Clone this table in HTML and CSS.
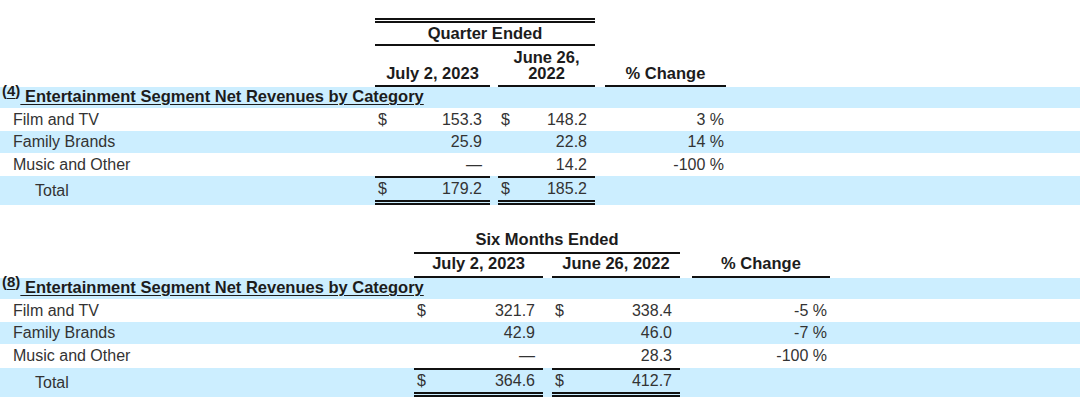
FILE: index.html
```html
<!DOCTYPE html>
<html lang="en">
<head>
<meta charset="utf-8">
<title>Entertainment Segment Net Revenues by Category</title>
<link rel="stylesheet" href="styles.css">
</head>
<body>
<table class="fin fin-q">
  <colgroup>
    <col class="c-label"><col class="c-a1"><col class="c-g1"><col class="c-a2"><col class="c-g2"><col class="c-pct"><col class="c-rest">
  </colgroup>
  <thead>
    <tr class="r-period">
      <td></td>
      <th colspan="3" class="period boxed-top">Quarter Ended</th>
      <td colspan="3"></td>
    </tr>
    <tr class="r-dates">
      <td></td>
      <th class="date">July 2, 2023</th>
      <td></td>
      <th class="date">June 26,<br>2022</th>
      <td></td>
      <th class="date">% Change</th>
      <td></td>
    </tr>
  </thead>
  <tbody>
    <tr class="band r-cat">
      <td colspan="7" class="cat"><sup class="fn">(<u>4</u>)</sup><u> Entertainment Segment Net Revenues by Category</u></td>
    </tr>
    <tr class="r-a">
      <td class="lbl">Film and TV</td>
      <td><div class="money"><span>$</span><span>153.3</span></div></td>
      <td></td>
      <td><div class="money"><span>$</span><span>148.2</span></div></td>
      <td></td>
      <td class="pct">3 %</td>
      <td></td>
    </tr>
    <tr class="band r-b">
      <td class="lbl">Family Brands</td>
      <td><div class="money"><span></span><span>25.9</span></div></td>
      <td></td>
      <td><div class="money"><span></span><span>22.8</span></div></td>
      <td></td>
      <td class="pct">14 %</td>
      <td></td>
    </tr>
    <tr class="r-a">
      <td class="lbl">Music and Other</td>
      <td><div class="money"><span></span><span>—</span></div></td>
      <td></td>
      <td><div class="money"><span></span><span>14.2</span></div></td>
      <td></td>
      <td class="pct">-100 %</td>
      <td></td>
    </tr>
    <tr class="band r-total">
      <td class="lbl total">Total</td>
      <td class="sum"><div class="money"><span>$</span><span>179.2</span></div></td>
      <td></td>
      <td class="sum"><div class="money"><span>$</span><span>185.2</span></div></td>
      <td></td>
      <td></td>
      <td></td>
    </tr>
  </tbody>
</table>

<table class="fin fin-s">
  <colgroup>
    <col class="c-label"><col class="c-a1"><col class="c-g1"><col class="c-a2"><col class="c-g2"><col class="c-pct"><col class="c-rest">
  </colgroup>
  <thead>
    <tr class="r-period">
      <td></td>
      <th colspan="3" class="period">Six Months Ended</th>
      <td colspan="3"></td>
    </tr>
    <tr class="r-dates">
      <td></td>
      <th class="date">July 2, 2023</th>
      <td></td>
      <th class="date">June 26, 2022</th>
      <td></td>
      <th class="date">% Change</th>
      <td></td>
    </tr>
  </thead>
  <tbody>
    <tr class="band r-cat">
      <td colspan="7" class="cat"><sup class="fn">(<u>8</u>)</sup><u> Entertainment Segment Net Revenues by Category</u></td>
    </tr>
    <tr class="r-a">
      <td class="lbl">Film and TV</td>
      <td><div class="money"><span>$</span><span>321.7</span></div></td>
      <td></td>
      <td><div class="money"><span>$</span><span>338.4</span></div></td>
      <td></td>
      <td class="pct">-5 %</td>
      <td></td>
    </tr>
    <tr class="band r-b">
      <td class="lbl">Family Brands</td>
      <td><div class="money"><span></span><span>42.9</span></div></td>
      <td></td>
      <td><div class="money"><span></span><span>46.0</span></div></td>
      <td></td>
      <td class="pct">-7 %</td>
      <td></td>
    </tr>
    <tr class="r-a r-c">
      <td class="lbl">Music and Other</td>
      <td><div class="money"><span></span><span>—</span></div></td>
      <td></td>
      <td><div class="money"><span></span><span>28.3</span></div></td>
      <td></td>
      <td class="pct">-100 %</td>
      <td></td>
    </tr>
    <tr class="band r-total">
      <td class="lbl total">Total</td>
      <td class="sum"><div class="money"><span>$</span><span>364.6</span></div></td>
      <td></td>
      <td class="sum"><div class="money"><span>$</span><span>412.7</span></div></td>
      <td></td>
      <td></td>
      <td></td>
    </tr>
  </tbody>
</table>
</body>
</html>
```

FILE: styles.css
```css
html, body {
  margin: 0;
  padding: 0;
  background: #ffffff;
}

body {
  font-family: "Liberation Sans", Arial, sans-serif;
  font-size: 16px;
  color: #2e2e2e;
  width: 1080px;
}

.fin {
  width: 1080px;
  table-layout: fixed;
  border-collapse: separate;
  border-spacing: 0;
}

.fin td, .fin th {
  padding: 0;
  white-space: nowrap;
}

.fin-q { margin-top: 18px; }
.fin-s { margin-top: 24px; }

/* columns: quarter table */
.fin-q .c-label { width: 375px; }
.fin-q .c-a1 { width: 115px; }
.fin-q .c-g1 { width: 8px; }
.fin-q .c-a2 { width: 97px; }
.fin-q .c-g2 { width: 10px; }
.fin-q .c-pct { width: 121px; }
.fin-q .c-rest { width: 354px; }

/* columns: six-month table */
.fin-s .c-label { width: 414px; }
.fin-s .c-a1 { width: 129px; }
.fin-s .c-g1 { width: 9px; }
.fin-s .c-a2 { width: 128px; }
.fin-s .c-g2 { width: 12px; }
.fin-s .c-pct { width: 138px; }
.fin-s .c-rest { width: 250px; }

/* headings */
.fin th {
  font-weight: bold;
  font-size: 16.5px;
  color: #1c1c1c;
  text-align: center;
}

.period {
  border-bottom: 2px solid #111;
  vertical-align: middle;
}

.boxed-top {
  border-top: 5px double #111;
}

.date {
  border-bottom: 2px solid #111;
  vertical-align: bottom;
  line-height: 16px;
  padding-bottom: 4px !important;
}

.fin-q .r-period { height: 28px; }
.fin-q .r-period .period { padding-bottom: 1px; }
.fin-q .r-dates { height: 41px; }

.fin-s .r-period { height: 25px; }
.fin-s .r-period .period { vertical-align: bottom; padding-bottom: 3px; }
.fin-s .r-dates { height: 24px; }
.fin-s .r-dates .date { padding-bottom: 5px !important; }

/* body rows */
.band { background: #cceeff; }

.r-cat { height: 21px; }
.r-a { height: 23px; }
.r-b { height: 22px; }
.fin-s .r-c { height: 24px; }
.r-total { height: 29px; }

.cat {
  font-weight: bold;
  font-size: 16.5px;
  color: #1c1c1c;
  padding-left: 2px !important;
  vertical-align: bottom;
  padding-bottom: 2px !important;
}

.cat u {
  text-decoration-thickness: 1px;
  text-underline-offset: 2px;
}

.fn {
  font-size: 15px;
  vertical-align: 6px;
  line-height: 0;
}

.lbl {
  padding-left: 13px !important;
  color: #333;
}

.lbl.total { padding-left: 35px !important; }

.money {
  display: flex;
  justify-content: space-between;
  padding: 0 8px 0 3px;
  color: #333;
}

.pct {
  text-align: right;
  padding-right: 2px !important;
  color: #333;
}

.fin-s .pct { padding-right: 3px !important; }

.sum {
  border-top: 2px solid #111;
  border-bottom: 5px double #111;
}
```
